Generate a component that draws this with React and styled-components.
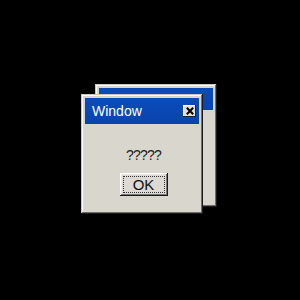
import styled, { createGlobalStyle } from 'styled-components'

const Global = createGlobalStyle`
  body {
    margin: 0;
    background: #000;
    font-family: "Liberation Sans", Arial, sans-serif;
  }
`

const Desktop = styled.div`
  width: 300px;
  height: 300px;
  background: #000;
  padding: 84px 0 0 81px;
  box-sizing: border-box;
`

const Stack = styled.div`
  position: relative;
  width: 136px;
  height: 131px;
`

const Frame = styled.div`
  position: absolute;
  left: ${({ offsetX }) => offsetX}px;
  top: ${({ offsetY }) => offsetY}px;
  width: 122px;
  height: ${({ tall }) => tall}px;
  box-sizing: border-box;
  padding: 4px;
  display: flex;
  flex-direction: column;
  background: #d8d6cd;
  box-shadow:
    inset -1px -1px 0 #1a1a1a,
    inset 1px 1px 0 #c9c7bf,
    inset -2px -2px 0 #6e6d69,
    inset 2px 2px 0 #fbfbf8;
`

const TitleBar = styled.div`
  height: ${({ short }) => (short ? 22 : 26)}px;
  background: linear-gradient(180deg, #0b4bbb 0%, #0944ad 100%);
  display: flex;
  align-items: center;
  justify-content: space-between;
  padding: 0 3px 0 7px;
  color: #fff;
  font-size: 14px;
`

const CloseButton = styled.div`
  width: 13px;
  height: 12px;
  background: #e2e0d8;
  box-shadow:
    inset -1px -1px 0 #222,
    inset 1px 1px 0 #fff;
  display: flex;
  align-items: center;
  justify-content: center;
`

const Body = styled.div`
  flex: 1;
  display: flex;
  flex-direction: column;
  align-items: center;
  padding-top: 23px;
  padding-left: 3px;
  gap: 10px;
`

const Message = styled.div`
  font-size: 14px;
  line-height: 16px;
  letter-spacing: -0.8px;
  color: #222;
`

const Button = styled.div`
  width: 48px;
  height: 23px;
  box-sizing: border-box;
  padding: 3px;
  background: #dcdad2;
  box-shadow:
    inset -1px -1px 0 #1a1a1a,
    inset 1px 1px 0 #fff,
    inset -2px -2px 0 #777,
    inset 2px 2px 0 #e8e6e0;
`

const Focus = styled.div`
  height: 100%;
  box-sizing: border-box;
  border: 1px dotted #333;
  display: flex;
  align-items: center;
  justify-content: center;
  font-size: 15px;
  color: #111;
`

const Window = ({ title, offsetX, offsetY, tall, children }) => (
  <Frame offsetX={offsetX} offsetY={offsetY} tall={tall}>
    <TitleBar short={!title}>
      {title}
      {title && (
        <CloseButton>
          <svg width="8" height="8" viewBox="0 0 8 8">
            <path d="M0.8 0.8 L7.2 7.2 M7.2 0.8 L0.8 7.2" stroke="#000" strokeWidth="2" />
          </svg>
        </CloseButton>
      )}
    </TitleBar>
    {children}
  </Frame>
)

export default function App() {
  return (
    <>
      <Global />
      <Desktop>
        <Stack>
          <Window offsetX={14} offsetY={0} tall={123} />
          <Window title="Window" offsetX={0} offsetY={10} tall={120}>
            <Body>
              <Message>?????</Message>
              <Button>
                <Focus>OK</Focus>
              </Button>
            </Body>
          </Window>
        </Stack>
      </Desktop>
    </>
  )
}
